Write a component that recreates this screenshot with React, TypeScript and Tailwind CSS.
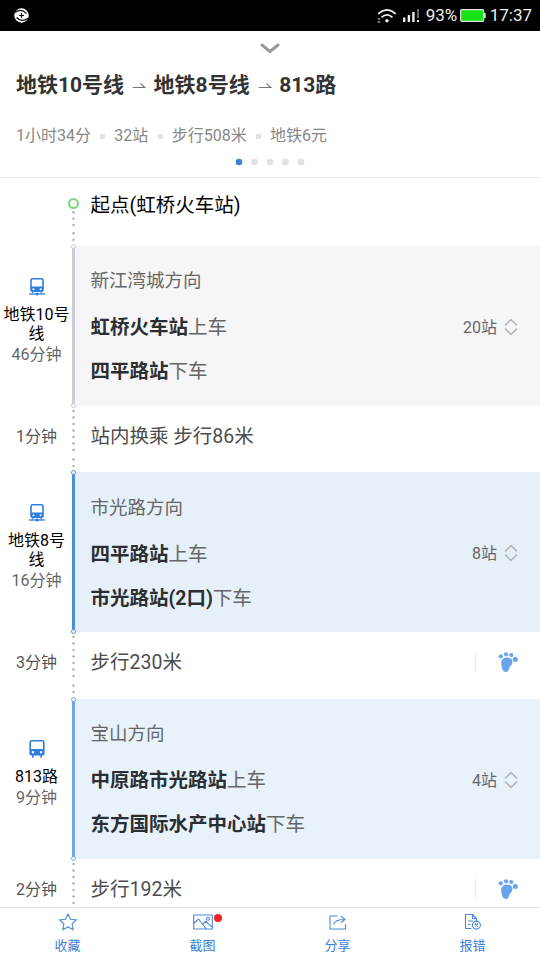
import type { ReactNode } from 'react';

type Ride = {
  line: string[];
  minutes: string;
  direction: string;
  from: string;
  to: string;
  stops: string;
  icon: ReactNode;
  panel: string;
  rail: string;
  dot: string;
};

function MetroIcon() {
  return (
    <svg className="block h-[18px] w-4" viewBox="0 0 16 18">
      <path fillRule="evenodd" fill="#2f7de1" d="M3.6 0h8.8Q14.8 0 14.8 2.4v9.4q0 2.2-2.2 2.2H3.4q-2.2 0-2.2-2.2V2.4Q1.2 0 3.6 0zM3.8 1.6Q2.8 1.6 2.8 2.6v5.800h10.400V2.600q0-1-1-1zM4.400 10.300a1 1 0 100 2 1 1 0 000-2zm7.200 0a1 1 0 100 2 1 1 0 000-2z" />
      <path d="M0 16h16M4 14 3 16M12 14l1 2" fill="none" stroke="#4a8fe6" strokeWidth="1.3" />
      <circle cx="8" cy="16" r="1.5" fill="#2f7de1" />
    </svg>
  );
}

function BusIcon() {
  return (
    <svg className="block h-[18px] w-4" viewBox="0 0 16 18">
      <path fillRule="evenodd" fill="#2f7de1" d="M3 0h10q2.6 0 2.6 2.6v11.2q0 1.7-1.7 1.7H2.1Q.4 15.5.4 13.8V2.6Q.4 0 3 0zM3 1.5q-1 0-1 1V9h12V2.5q0-1-1-1zM3.9 11a1.2 1.2 0 100 2.4 1.2 1.2 0 000-2.4zm8.200 0a1.200 1.200 0 100 2.400 1.200 1.200 0 000-2.400z" />
      <path d="M3.8 15v2.7M12.2 15v2.7" stroke="#2f7de1" strokeWidth="1.6" />
    </svg>
  );
}

function FootIcon() {
  return (
    <svg className="block h-5 w-5" viewBox="0 0 20 20" fill="#68a5ee">
      <circle cx="2.8" cy="4.3" r="2.1" />
      <circle cx="8" cy="2.3" r="2.1" />
      <circle cx="13.2" cy="3" r="2.1" />
      <circle cx="17.3" cy="7.6" r="2.5" />
      <path d="M8.200 5.500c3.700-.3 6.600 1.500 6.300 4.900-.3 2.800-3 3.600-3.400 6-.3 2-1.300 3.600-3.400 3.500-2.700-.1-3.500-2.900-4.100-5.600C2.400 10 3.900 5.900 8.200 5.500z" />
    </svg>
  );
}

function UpDownIcon() {
  return (
    <svg className="block h-[18px] w-4" viewBox="0 0 16 18" fill="none" stroke="#b5b7b9" strokeWidth="1.6">
      <path d="M2 7.3 8 1.6 14 7.3M2 10.7l6 5.7 6-5.7" />
    </svg>
  );
}

function Arrow() {
  return (
    <svg className="mr-[7.5px] ml-2 block h-3 w-[14px]" viewBox="0 0 14 12" fill="none" stroke="#777" strokeWidth="1.1">
      <path d="M.8 7.5h12L8.3 3.4" />
    </svg>
  );
}

function Dots({ ys, height }: { ys: number[]; height: number }) {
  return (
    <svg className="block w-[5px] shrink-0" width="5" height={height} viewBox={`0 0 5 ${height}`} fill="#a9aeb4">
      {ys.map((y) => (
        <circle key={y} cx="2.5" cy={y} r="1.2" />
      ))}
    </svg>
  );
}

const walkDots = [5, 11.5, 18, 24.5, 31, 37.5, 44, 53.5, 60];

const rides: Ride[] = [
  {
    line: ['地铁10号', '线'],
    minutes: '46分钟',
    direction: '新江湾城方向',
    from: '虹桥火车站',
    to: '四平路站',
    stops: '20站',
    icon: <MetroIcon />,
    panel: 'bg-[#f6f6f8]',
    rail: 'bg-[#cfcbd9]',
    dot: 'border-[#c9c6d2]',
  },
  {
    line: ['地铁8号', '线'],
    minutes: '16分钟',
    direction: '市光路方向',
    from: '四平路站',
    to: '市光路站(2口)',
    stops: '8站',
    icon: <MetroIcon />,
    panel: 'bg-[#e5f0f8]',
    rail: 'bg-[#4a90d9]',
    dot: 'border-[#4a90d9]',
  },
  {
    line: ['813路'],
    minutes: '9分钟',
    direction: '宝山方向',
    from: '中原路市光路站',
    to: '东方国际水产中心站',
    stops: '4站',
    icon: <BusIcon />,
    panel: 'bg-[#e8f2fb]',
    rail: 'bg-[#6fa8ea]',
    dot: 'border-[#6fa8ea]',
  },
];

const walks = [
  { minutes: '1分钟', text: '站内换乘 步行86米', foot: false },
  { minutes: '3分钟', text: '步行230米', foot: true },
  { minutes: '2分钟', text: '步行192米', foot: true },
];

function RideRow({ ride }: { ride: Ride }) {
  return (
    <div className="flex h-[159.9px]">
      <div className="flex w-[72px] shrink-0 flex-col items-center justify-center pb-[10px] pl-px text-center text-[16px] leading-[19px] text-black">
        {ride.icon}
        <div className="mt-[9px]">
          {ride.line.map((part) => (
            <div key={part} className="whitespace-nowrap">{part}</div>
          ))}
        </div>
        <div className="mt-[2px] text-[#666]">{ride.minutes}</div>
      </div>
      <div className={`relative w-[3px] shrink-0 ${ride.rail}`}>
        <span className={`absolute -top-[2px] -left-[1px] z-10 h-[5px] w-[5px] rounded-full border bg-white ${ride.dot}`} />
        <span className={`absolute -bottom-[2px] -left-[1px] z-10 h-[5px] w-[5px] rounded-full border bg-white ${ride.dot}`} />
      </div>
      <div className={`flex grow items-center justify-between pr-[21px] pl-[15.5px] ${ride.panel}`}>
        <div className="text-[19.5px] leading-[44px] text-[#666]">
          <div className="pt-[2px] text-[18.5px]">{ride.direction}</div>
          <div className="pt-[3px]"><b className="text-[#2b2f33]">{ride.from}</b>上车</div>
          <div><b className="text-[#2b2f33]">{ride.to}</b>下车</div>
        </div>
        <div className="flex items-center gap-[6px] pt-[2px] text-[16px] text-[#666]">
          <span className="pt-[2px]">{ride.stops}</span>
          <UpDownIcon />
        </div>
      </div>
    </div>
  );
}

function WalkRow({ walk }: { walk: (typeof walks)[number] }) {
  return (
    <div className="flex h-[66.5px]">
      <div className="w-[71px] shrink-0 pt-[19px] pl-[2px] text-center text-[16px] leading-6 text-[#555]">{walk.minutes}</div>
      <Dots ys={walkDots} height={66} />
      <div className="grow pt-[17px] pl-[14.5px] text-[19.5px] leading-7 text-[#4d4d4d]">{walk.text}</div>
      {walk.foot && (
        <div className="mt-[20px] flex h-5 items-center gap-[22px] pr-[22px]">
          <span className="h-5 w-px bg-[#ececec]" />
          <FootIcon />
        </div>
      )}
    </div>
  );
}

function StatusBar() {
  return (
    <div className="flex h-[31px] shrink-0 items-center bg-black pr-2 pl-[14px] text-[17px] text-[#eee]">
      <svg className="block h-[15px] w-[15px]" viewBox="0 0 15 15">
        <circle cx="7.5" cy="7.5" r="7.2" fill="#fff" />
        <path d="M1 4.5Q7.5-.2 12.5 5.6M2.5 9.500Q7.500 15 14 10.300M7.500 5v5M5 7.500h5" fill="none" stroke="#111" strokeWidth="1.2" />
      </svg>
      <div className="grow" />
      <svg className="mr-[6px] block h-[14px] w-5" viewBox="0 0 20 14" fill="none" stroke="#eee" strokeWidth="1.8">
        <path d="M1.2 4.8Q10-3 18.8 4.8M4.5 8.4Q10 3.4 15.500 8.400" />
        <circle cx="10" cy="11.8" r="1.7" fill="#eee" stroke="none" />
        <path d="M.8 10h2.400M.8 13h2.400" strokeWidth="1.2" />
      </svg>
      <svg className="mr-[6px] block h-[13px] w-[17px]" viewBox="0 0 17 13" fill="#eee">
        <path d="M0 8.5h2.4V13H0zM4.7 6h2.4v7H4.7zM9.2 3h2.4v10H9.2z" />
        <path d="M14 0h2v9h-2z" fill="#666" />
        <path d="M14 11h2v2h-2z" />
      </svg>
      <span className="w-[31px]">93%</span>
      <svg className="mr-[4px] ml-[3px] block h-[13px] w-[26px]" viewBox="0 0 26 13">
        <rect x=".7" y=".7" width="23" height="11.6" rx="1" fill="#16e216" stroke="#e4e4e4" strokeWidth="1.2" />
        <path d="M24 4h1.7v5H24z" fill="#e4e4e4" />
      </svg>
      <span>17:37</span>
    </div>
  );
}

function Header() {
  return (
    <header className="h-[147px] shrink-0 border-b border-[#e3e8ec] pt-3">
      <svg className="mx-auto block h-[11px] w-5" viewBox="0 0 20 11" fill="none" stroke="#999" strokeWidth="3" strokeLinecap="round">
        <path d="M2 2 10 8.5 18 2" />
      </svg>
      <h1 className="mt-4 flex h-[31px] items-center pl-4 text-[21px] font-bold text-[#333]">
        地铁10号线<Arrow />地铁8号线<Arrow />813路
      </h1>
      <div className="mt-[23px] flex h-6 items-center gap-[9.2px] pl-4 text-[16px] text-[#888]">
        <span>1小时34分</span>
        <i className="h-[5px] w-[5px] bg-[#e3e3e3]" />
        <span>32站</span>
        <i className="h-[5px] w-[5px] bg-[#e3e3e3]" />
        <span>步行508米</span>
        <i className="h-[5px] w-[5px] bg-[#e3e3e3]" />
        <span>地铁6元</span>
      </div>
      <svg className="mx-auto mt-[10px] block h-2 w-[70px]" viewBox="0 0 70 8" fill="#e0e0e0">
        <circle cx="4" cy="4" r="3.3" fill="#3a84dc" />
        <circle cx="19.5" cy="4" r="3.3" />
        <circle cx="35" cy="4" r="3.3" />
        <circle cx="50.5" cy="4" r="3.3" />
        <circle cx="66" cy="4" r="3.3" />
      </svg>
    </header>
  );
}

function Footer() {
  const svg = 'block h-[18px] w-5';
  return (
    <footer className="grid h-[53px] shrink-0 grid-cols-4 border-t border-[#dfe2e5] bg-white pt-[5px] text-[13px] leading-5 text-[#3b7fd6]">
      <div className="flex flex-col items-center gap-[5px]">
        <svg className={svg} viewBox="0 0 20 18" fill="none" stroke="#4a8ad8" strokeWidth="1.1">
          <path d="m10 1 2.5 5.3 5.8.7-4.2 4 1.1 5.7-5.2-2.8-5.2 2.8 1.1-5.7L1.7 7l5.8-.7z" />
        </svg>
        收藏
      </div>
      <div className="flex flex-col items-center gap-[5px]">
        <div className="relative">
          <svg className={svg} viewBox="0 0 20 18" fill="none" stroke="#4a8ad8" strokeWidth="1.1">
            <path d="M.7 2h18.600v14H.7zM.7 10.500 5.500 6l7.800 10M9.800 11l3-2.700 6.500 6" />
            <circle cx="15" cy="5.8" r="1.5" />
          </svg>
          <span className="absolute top-px left-[21.5px] h-2 w-2 rounded-full bg-[#ee2222]" />
        </div>
        截图
      </div>
      <div className="flex flex-col items-center gap-[5px]">
        <svg className={svg} viewBox="0 0 20 18" fill="none" stroke="#4a8ad8" strokeWidth="1.1">
          <path d="M9.5 3H2v13h15.500v-5M5.500 11.500Q7 6.500 16.500 6.500M12.800 2.800l4.200 3.700-4 3.300" />
        </svg>
        分享
      </div>
      <div className="flex flex-col items-center gap-[5px]">
        <svg className={svg} viewBox="0 0 20 18" fill="none" stroke="#4a8ad8" strokeWidth="1.1">
          <path d="M8.5 15.5h-6v-14h7l4 4v2.500M9.500 1.500v4h4M5 8h5M5 11.500h2.500M11.800 10.500l3.200 3.200M15 10.500l-3.200 3.200" />
          <circle cx="13.4" cy="12.1" r="4" />
        </svg>
        报错
      </div>
    </footer>
  );
}

export default function App() {
  return (
    <div lang="zh-CN" className="flex h-[960px] w-[540px] flex-col overflow-hidden bg-white font-['Roboto','Noto_Sans_CJK_SC',sans-serif]">
      <StatusBar />
      <Header />
      <main className="min-h-0 grow overflow-hidden">
        {/* Start point */}
        <div className="flex h-[68px]">
          <div className="w-[68px] shrink-0" />
          <div className="flex w-[11px] flex-col items-center pt-[20px]">
            <span className="h-[11px] w-[11px] shrink-0 rounded-full border-2 border-[#7bd67b]" />
            <Dots ys={[3.3, 9.7, 16, 24.3, 30.7]} height={37} />
          </div>
          <div className="pt-[14px] pl-[11.5px] text-[19.5px] leading-7 text-black">起点(虹桥火车站)</div>
        </div>
        {rides.map((ride, i) => (
          <div key={ride.direction}>
            <RideRow ride={ride} />
            <WalkRow walk={walks[i]} />
          </div>
        ))}
      </main>
      <Footer />
    </div>
  );
}
